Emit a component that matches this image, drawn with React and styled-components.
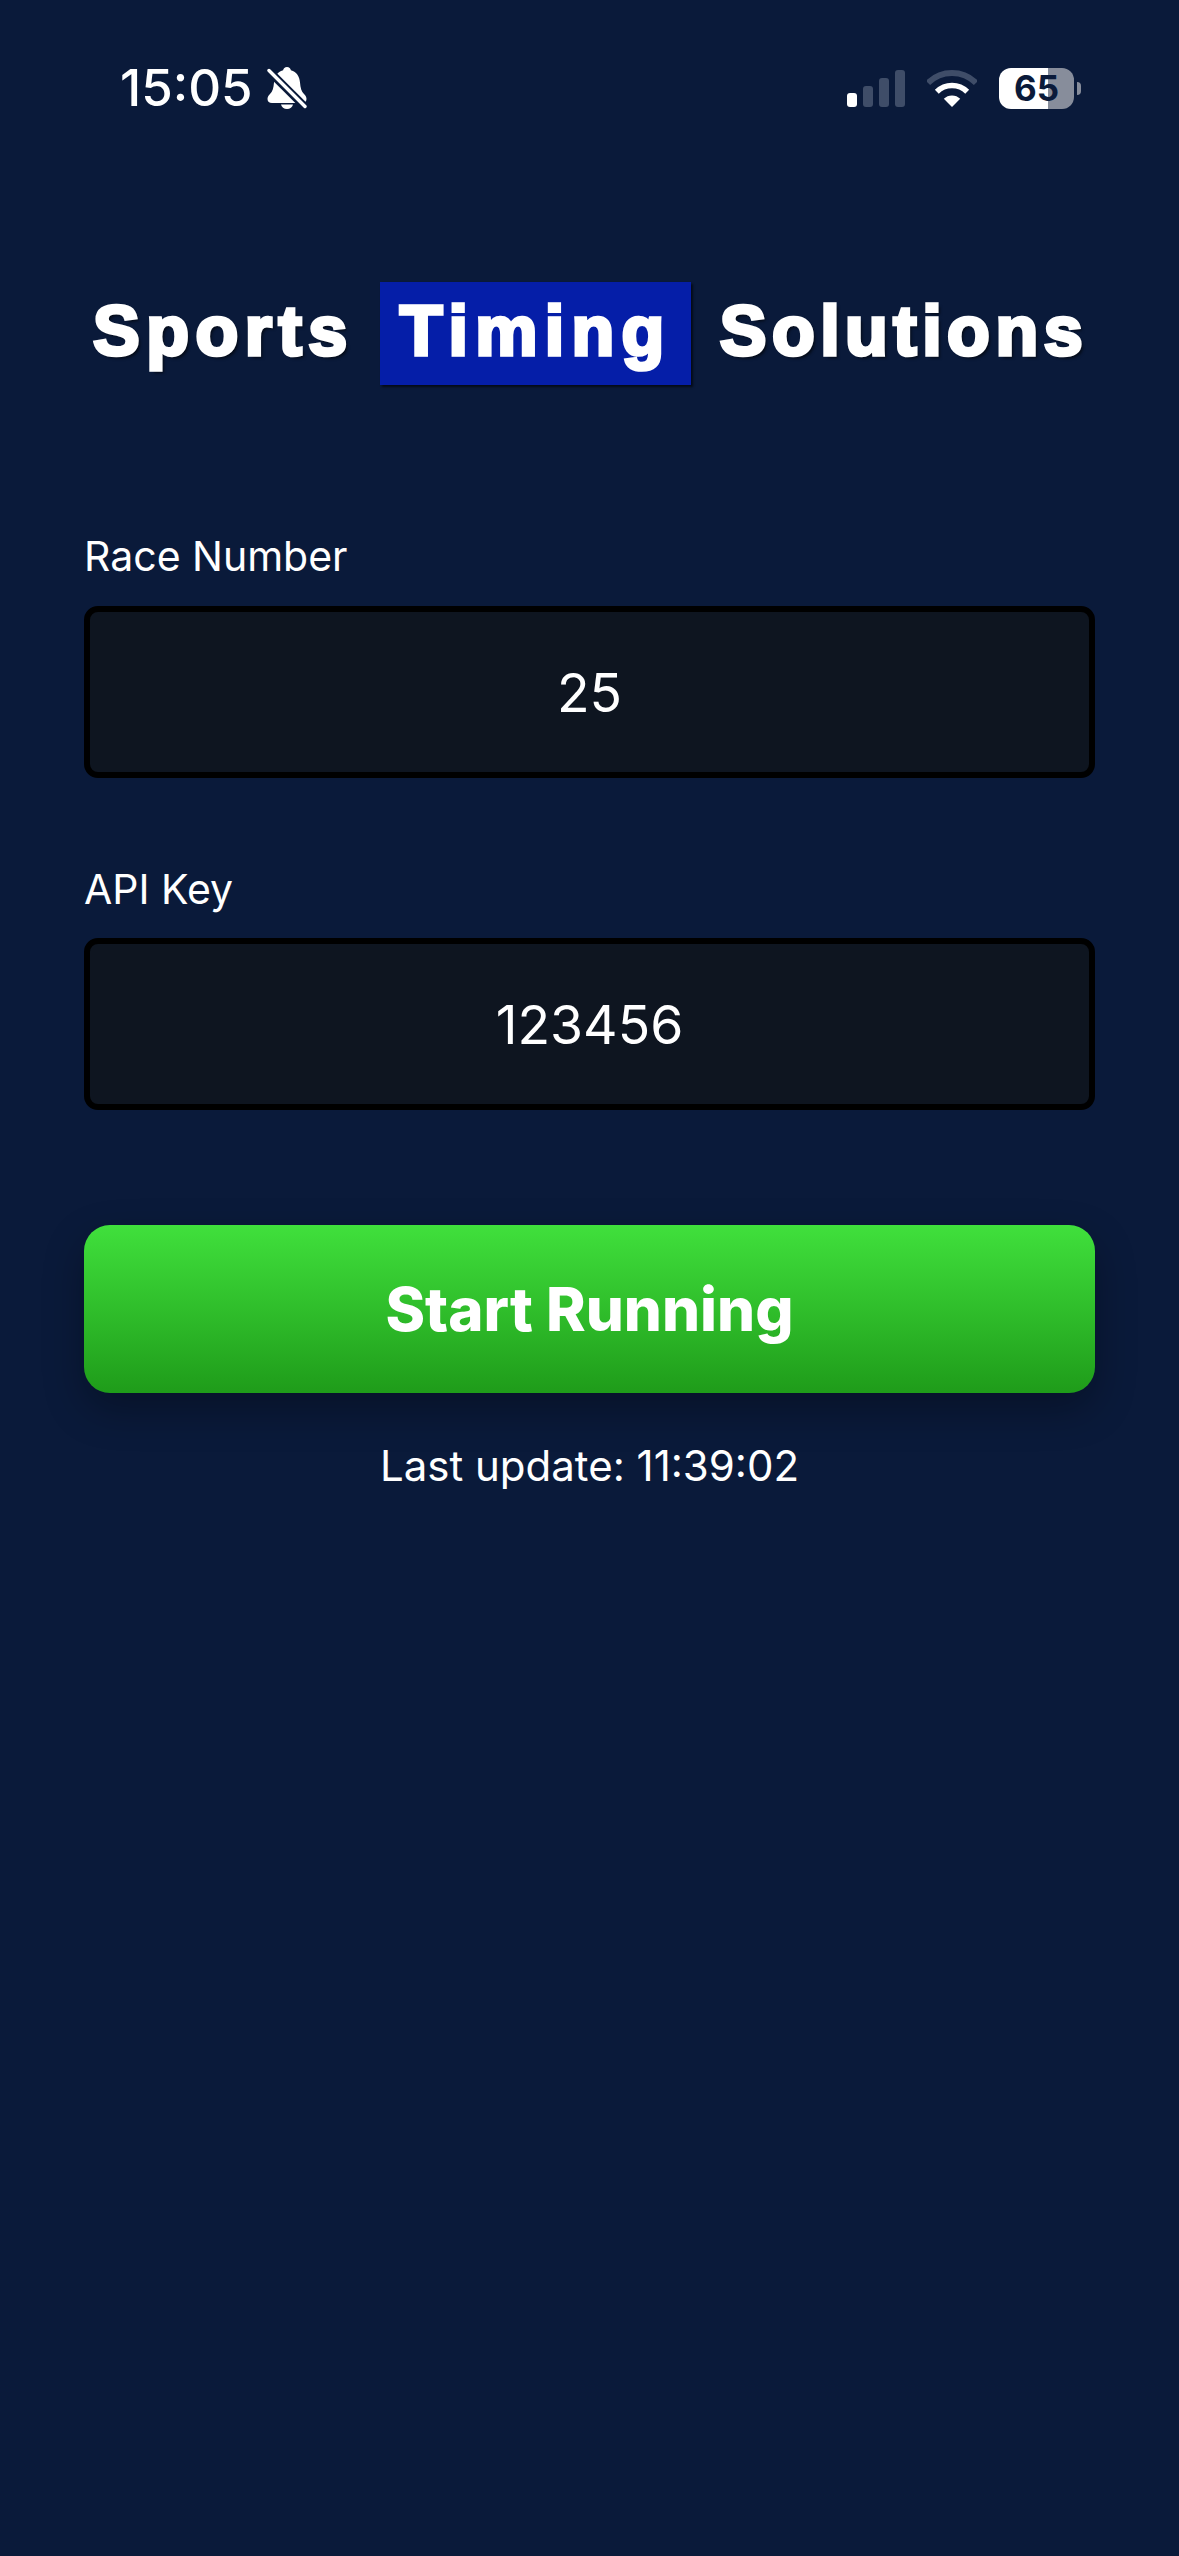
import styled, { createGlobalStyle } from 'styled-components'

const GlobalStyle = createGlobalStyle`
  html, body {
    margin: 0;
    padding: 0;
    background: #0a1a3a;
  }
`

const Page = styled.div`
  box-sizing: border-box;
  width: 1179px;
  height: 2556px;
  padding: 0 84px;
  background: #0a1a3a;
  color: #fff;
  font-family: Inter, "Liberation Sans", sans-serif;
  overflow: hidden;
`

const StatusBar = styled.div`
  display: flex;
  justify-content: space-between;
  align-items: center;
  height: 42px;
  margin: 0 -84px;
  padding: 67px 105px 0 120px;
`

const StatusGroup = styled.div`
  display: flex;
  align-items: center;
  gap: ${(props) => props.$gap}px;
`

const Clock = styled.span`
  font-size: 51px;
  font-weight: 500;
  line-height: 42px;
`

const Battery = styled.div`
  position: relative;
  width: 75px;
  height: 41px;
  border-radius: 12px;
  background: linear-gradient(90deg, #fff 0 49px, #878d9b 49px);
  color: #0a1a3a;
  font-size: 35px;
  font-weight: 700;
  line-height: 41px;
  text-align: center;

  &::after {
    content: '';
    position: absolute;
    top: 14px;
    right: -7px;
    width: 4px;
    height: 13px;
    border-radius: 0 6px 6px 0;
    background: #878d9b;
  }
`

const Logo = styled.div`
  display: flex;
  align-items: flex-start;
  height: 104px;
  margin-top: 173px;
  padding-left: 9px;
  font-family: "Liberation Sans", Arial, sans-serif;
  font-size: 70px;
  font-weight: 700;
  line-height: 98px;
`

const LogoWord = styled.span`
  letter-spacing: ${(props) => props.$spacing}px;
  -webkit-text-stroke: 3.6px #fff;
  text-shadow: 3px 3px 3px rgba(0, 0, 0, 0.6);
`

const LogoBox = styled.span`
  box-sizing: border-box;
  width: 311px;
  height: 103px;
  margin: 0 29px 0 26px;
  padding-left: 20px;
  background: #051ea8;
  box-shadow: 2px 2px 2px rgba(0, 0, 0, 0.6);
  letter-spacing: 7.3px;
  -webkit-text-stroke: 3.6px #fff;
  white-space: nowrap;
`

const Label = styled.div`
  margin: ${(props) => props.$top}px 0 ${(props) => props.$bottom}px;
  font-size: 41px;
  font-weight: 380;
  line-height: 50px;
`

const ValueBox = styled.div`
  box-sizing: border-box;
  display: flex;
  justify-content: center;
  align-items: center;
  height: 172px;
  border: 6px solid #000;
  border-radius: 14px;
  background: #0e1520;
  font-size: 53.5px;
  font-weight: 380;
`

const StartButton = styled.button`
  display: block;
  width: 100%;
  height: 168px;
  margin-top: 115px;
  padding: 0;
  border: 0;
  border-radius: 26px;
  background: linear-gradient(180deg, #40e03c, #1f9c1a);
  box-shadow: 0 16px 40px rgba(0, 0, 0, 0.3);
  color: #fff;
  font-family: inherit;
  font-size: 60px;
  font-weight: 760;
`

const LastUpdate = styled.div`
  margin-top: 48px;
  font-size: 42px;
  font-weight: 380;
  line-height: 50px;
  text-align: center;
`

const BellSlash = () => (
  <svg width="40" height="42" viewBox="0 0 40 42">
    <path
      fill="#fff"
      d="M20 0c2.2 0 3.6 1.4 3.9 3.2C29.800 4.800 32.500 9.500 33 15.500c.4 5.500 1.500 9 4 11.500 1.800 1.800 2.500 3 2.500 5 0 2.500-1.800 4-4.500 4H5c-2.700 0-4.500-1.500-4.500-4 0-2 .700-3.200 2.500-5 2.500-2.500 3.600-6 4-11.500C7.500 9.500 10.200 4.800 16.100 3.200 16.400 1.400 17.800 0 20 0z"
    />
    <path fill="#fff" d="M14 37.500h12c-.5 2.700-3 4.500-6 4.500s-5.500-1.800-6-4.500z" />
    <path stroke="#0a1a3a" strokeWidth="8" d="M-2 0L42 44" />
    <path stroke="#fff" strokeWidth="3.400" strokeLinecap="round" d="M2 3.500L38 39.500" />
  </svg>
)

const SignalBars = () => (
  <svg width="58" height="37" viewBox="0 0 58 37">
    <rect x="0" y="23" width="10" height="14" rx="3" fill="#fff" />
    <rect x="16" y="16" width="10" height="21" rx="3" fill="#3f4d68" />
    <rect x="32" y="8" width="10" height="29" rx="3" fill="#3f4d68" />
    <rect x="48" y="0" width="10" height="37" rx="3" fill="#3f4d68" />
  </svg>
)

const WifiIcon = () => (
  <svg width="50" height="37" viewBox="0 0 50 37" fill="none">
    <path stroke="#3f4d68" strokeWidth="6" d="M1 13A34 34 0 0 1 49 13" />
    <path stroke="#fff" strokeWidth="5.500" d="M9.800 21.800A21.500 21.500 0 0 1 40.200 21.800" />
    <path fill="#fff" d="M25 37L16.800 28.800A11.600 11.600 0 0 1 33.200 28.800Z" />
  </svg>
)

const App = () => {
  return (
    <Page>
      <GlobalStyle />
      <StatusBar>
        <StatusGroup $gap={14}>
          <Clock>15:05</Clock>
          <BellSlash />
        </StatusGroup>
        <StatusGroup $gap={22}>
          <SignalBars />
          <WifiIcon />
          <Battery>65</Battery>
        </StatusGroup>
      </StatusBar>

      <Logo>
        <LogoWord $spacing={6.5}>Sports</LogoWord>
        <LogoBox>Timing</LogoBox>
        <LogoWord $spacing={5.5}>Solutions</LogoWord>
      </Logo>

      <Label $top={145} $bottom={25}>Race Number</Label>
      <ValueBox>25</ValueBox>

      <Label $top={86} $bottom={24}>API Key</Label>
      <ValueBox>123456</ValueBox>

      <StartButton>Start Running</StartButton>
      <LastUpdate>Last update: 11:39:02</LastUpdate>
    </Page>
  )
}

export default App
